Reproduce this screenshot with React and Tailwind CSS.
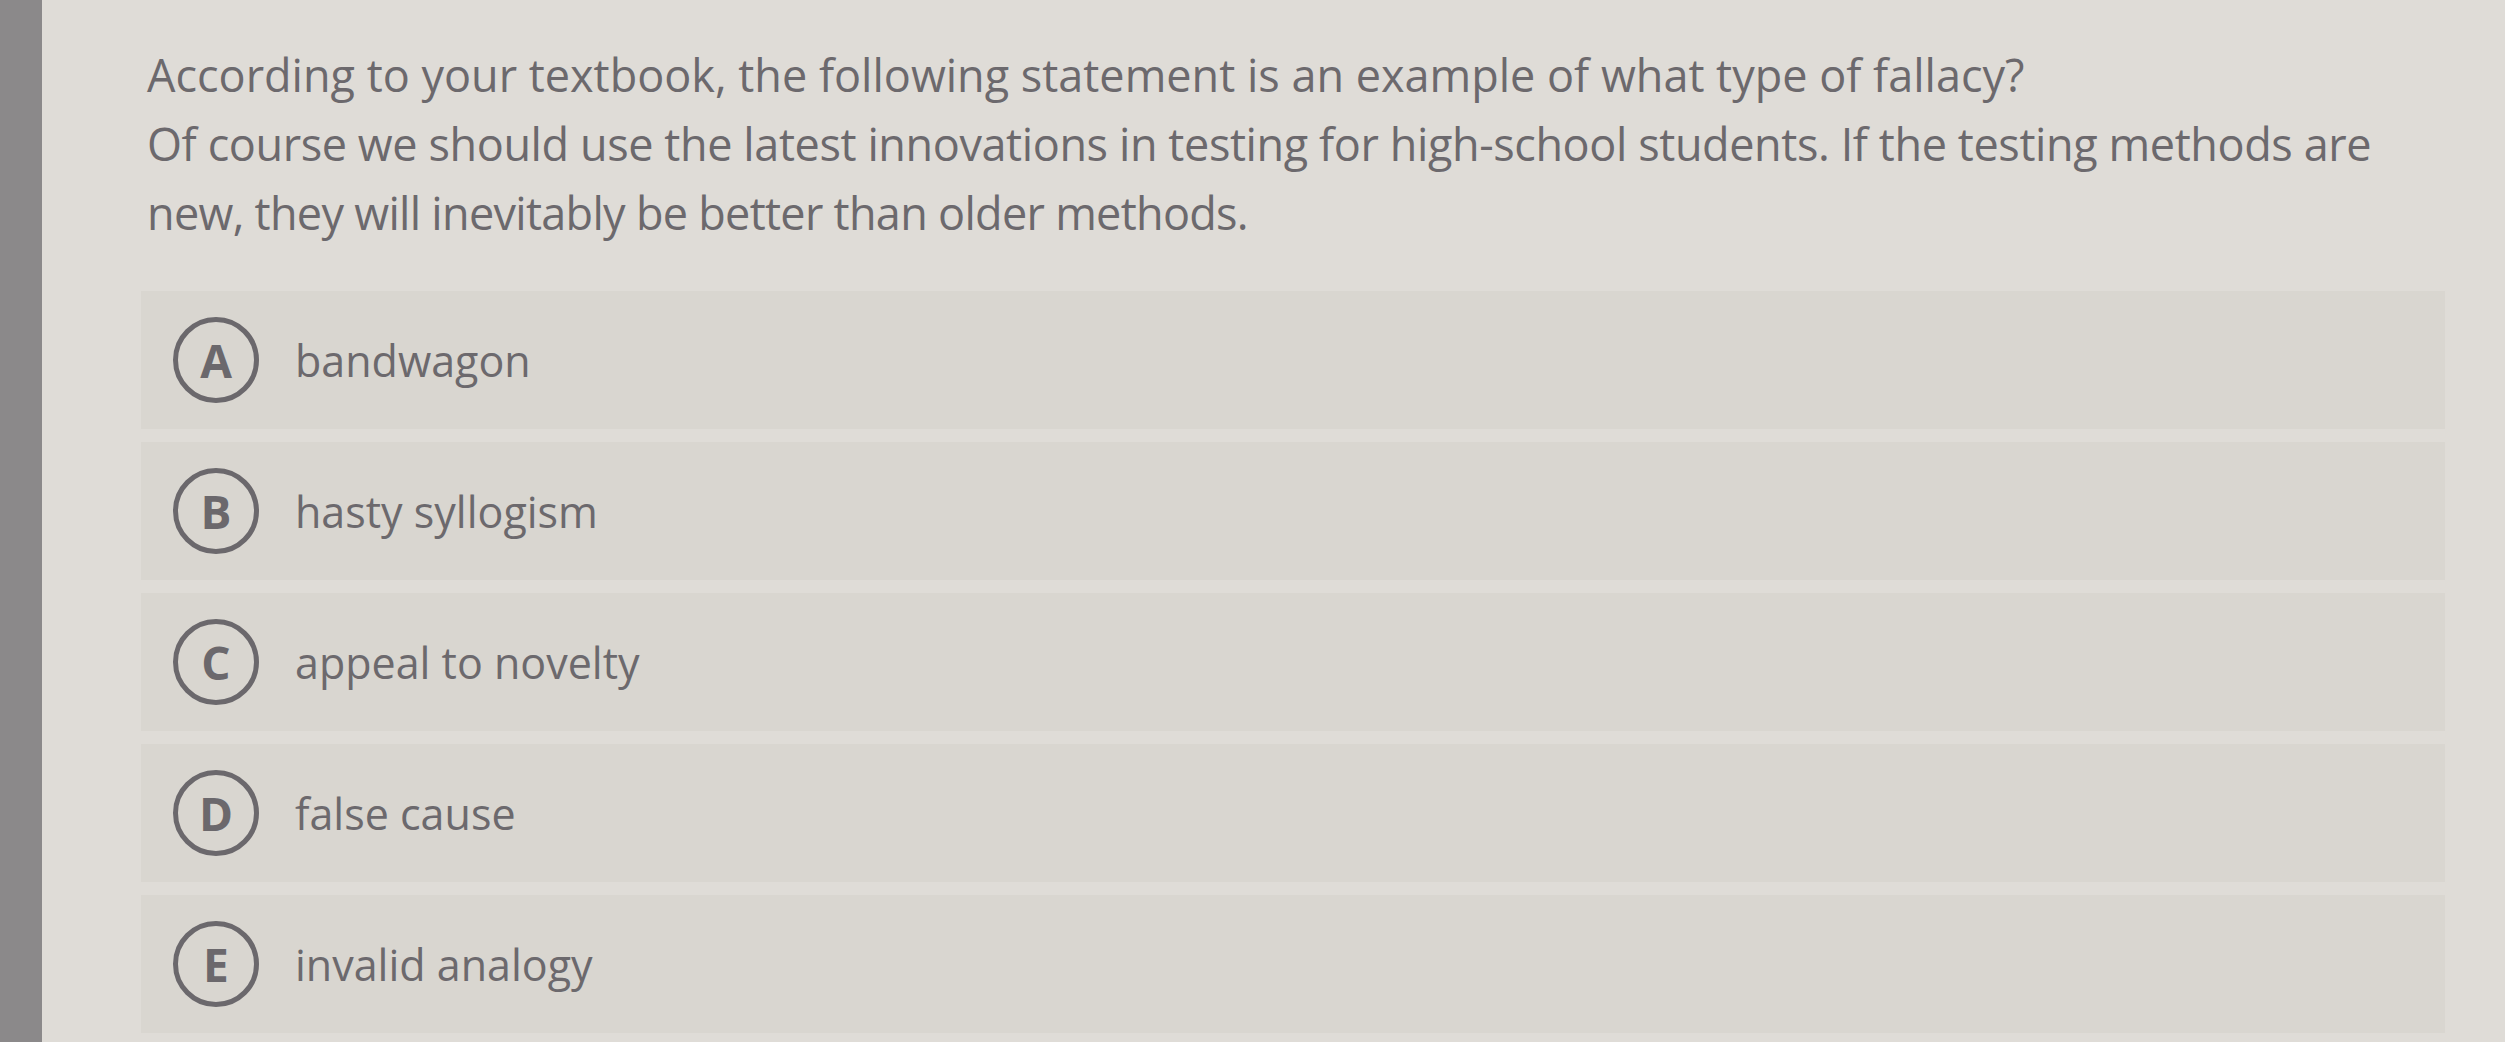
import React from "react";

const options = [
  { l: "A", t: "bandwagon" },
  { l: "B", t: "hasty syllogism" },
  { l: "C", t: "appeal to novelty" },
  { l: "D", t: "false cause" },
  { l: "E", t: "invalid analogy" },
];

export default function App() {
  return (
    <div
      className="flex w-full h-[1042px] overflow-hidden bg-[#dfdcd7]"
      style={{ fontFamily: '"Open Sans", "Noto Sans", sans-serif' }}
    >
      <div className="w-[42px] shrink-0 bg-[#8b898a]" />
      <div className="flex-1 flex flex-col">
        <div className="pl-[105px] pr-[20px] pt-[40px] text-[45px] leading-[69px] text-[#6c696d] whitespace-nowrap">
          <p>According to your textbook, the following statement is an example of what type of fallacy?</p>
          <p>
            <span className="tracking-[-0.4px]">
              Of course we should use the latest innovations in testing for high-school students. If the testing methods are
            </span>
            <br />
            <span className="tracking-[-0.7px]">new, they will inevitably be better than older methods.</span>
          </p>
        </div>
        <div className="mt-[44px] ml-[99px] mr-[60px] flex flex-col gap-[13px]">
          {options.map((o) => (
            <div
              key={o.l}
              className="h-[138px] shrink-0 bg-[#d9d6d0] flex items-center pl-[32px]"
            >
              <div className="w-[86px] h-[86px] shrink-0 rounded-full border-[5px] border-[#6b686c] flex items-center justify-center text-[46px] font-bold text-[#6b686c] leading-none">
                {o.l}
              </div>
              <span className="ml-[36px] text-[43px] text-[#6c696d] leading-none">{o.t}</span>
            </div>
          ))}
        </div>
      </div>
    </div>
  );
}
